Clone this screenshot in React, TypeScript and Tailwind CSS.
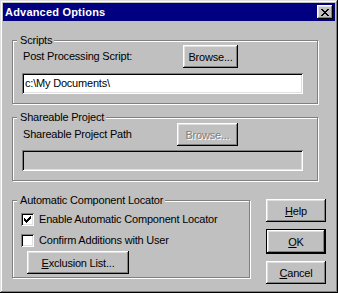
import type { ReactNode } from "react"

const raised =
  "shadow-[inset_-1px_-1px_#000,inset_1px_1px_#fff,inset_-2px_-2px_#808080,inset_2px_2px_#dfdfdf]"
const sunken =
  "shadow-[inset_1px_1px_#808080,inset_-1px_-1px_#fff,inset_2px_2px_#000,inset_-2px_-2px_#dfdfdf]"

function Group({ title, className, children }: { title: string; className: string; children: ReactNode }) {
  return (
    <div className={`flex flex-col border border-[#808080] shadow-[inset_1px_1px_#fff,1px_1px_#fff] ${className}`}>
      <div className="-mt-[7px] -mb-px ml-[4px] h-[12px] self-start bg-[#c0c0c0] pl-[3px] pr-[2px] leading-[12px]">
        {title}
      </div>
      {children}
    </div>
  )
}

function Button({ className, children }: { className: string; children: ReactNode }) {
  return (
    <div className={`flex h-[23px] items-center justify-center bg-[#c0c0c0] leading-[12px] ${raised} ${className}`}>
      {children}
    </div>
  )
}

function Checkbox({ checked }: { checked: boolean }) {
  // 7x7 pixel check mark as in the classic dialog
  const check = [
    [6, 0, 1, 1],
    [5, 1, 2, 1],
    [0, 2, 1, 1],
    [4, 2, 3, 1],
    [0, 3, 2, 1],
    [3, 3, 3, 1],
    [0, 4, 5, 1],
    [1, 5, 3, 1],
    [2, 6, 1, 1],
  ]
  return (
    <div className={`flex h-[13px] w-[13px] items-center justify-center bg-white ${sunken}`}>
      {checked && (
        <svg width="7" height="7" viewBox="0 0 7 7" shapeRendering="crispEdges">
          {check.map(([x, y, w, h], i) => (
            <rect key={i} x={x} y={y} width={w} height={h} fill="#000" />
          ))}
        </svg>
      )}
    </div>
  )
}

export default function App() {
  const cross = [
    [0, 0, 2, 1],
    [6, 0, 2, 1],
    [1, 1, 2, 1],
    [5, 1, 2, 1],
    [2, 2, 4, 1],
    [3, 3, 2, 1],
    [2, 4, 4, 1],
    [1, 5, 2, 1],
    [5, 5, 2, 1],
    [0, 6, 2, 1],
    [6, 6, 2, 1],
  ]

  return (
    <div
      className={`flex h-[293px] w-[338px] flex-col bg-[#c0c0c0] p-[3px] font-['Liberation_Sans',Arial,sans-serif] text-[11px] tracking-[-0.2px] text-black shadow-[inset_-1px_-1px_#000,inset_1px_1px_#dfdfdf,inset_-2px_-2px_#808080,inset_2px_2px_#fff]`}
    >
      {/* Title bar */}
      <div className="flex h-[18px] items-center justify-between bg-[#000080] pl-[2px] pr-[2px]">
        <span className="text-[11px] font-bold tracking-[0.2px] text-white">Advanced Options</span>
        <div className={`flex h-[14px] w-[16px] items-center justify-center bg-[#c0c0c0] ${raised}`}>
          <svg width="8" height="7" viewBox="0 0 8 7" shapeRendering="crispEdges">
            {cross.map(([x, y, w, h], i) => (
              <rect key={i} x={x} y={y} width={w} height={h} fill="#000" />
            ))}
          </svg>
        </div>
      </div>

      {/* Scripts */}
      <Group title="Scripts" className="ml-[9px] mt-[19px] h-[64px] w-[306px]">
        <div className="flex items-center">
          <span className="ml-[10px] w-[160px]">Post Processing Script:</span>
          <Button className="w-[55px]">Browse...</Button>
        </div>
        <div className={`ml-[9px] mt-[5px] flex h-[21px] w-[281px] items-center bg-white pl-[3px] ${sunken}`}>
          c:\My Documents\
        </div>
      </Group>

      {/* Shareable project */}
      <Group title="Shareable Project" className="ml-[9px] mt-[13px] h-[64px] w-[306px]">
        <div className="mt-px flex items-center">
          <span className="ml-[10px] w-[154px]">Shareable Project Path</span>
          <Button className="w-[61px] text-[#808080] [text-shadow:1px_1px_0_#fff]">Browse...</Button>
        </div>
        <div className={`ml-[9px] mt-[4px] h-[21px] w-[281px] bg-[#c0c0c0] ${sunken}`} />
      </Group>

      <div className="ml-[9px] mt-[18px] flex items-start">
        {/* Automatic component locator */}
        <Group title="Automatic Component Locator" className="mt-px h-[78px] w-[238px]">
          <div className="ml-[8px] mt-[8px] flex h-[13px] items-center">
            <Checkbox checked />
            <span className="ml-[5px]">Enable Automatic Component Locator</span>
          </div>
          <div className="ml-[8px] mt-[8px] flex h-[13px] items-center">
            <Checkbox checked={false} />
            <span className="ml-[5px]">Confirm Additions with User</span>
          </div>
          <Button className="ml-[14px] mt-[4px] w-[102px]">
            <span>
              <u>E</u>xclusion List...
            </span>
          </Button>
        </Group>

        {/* Dialog buttons */}
        <div className="ml-[16px] flex w-[60px] flex-col gap-[7px]">
          <Button className="w-[60px]">
            <span>
              <u>H</u>elp
            </span>
          </Button>
          <div className="border border-black">
            <Button className="h-[21px] w-[58px]">
              <span>
                <u>O</u>K
              </span>
            </Button>
          </div>
          <Button className="w-[60px]">
            <span>
              <u>C</u>ancel
            </span>
          </Button>
        </div>
      </div>
    </div>
  )
}
